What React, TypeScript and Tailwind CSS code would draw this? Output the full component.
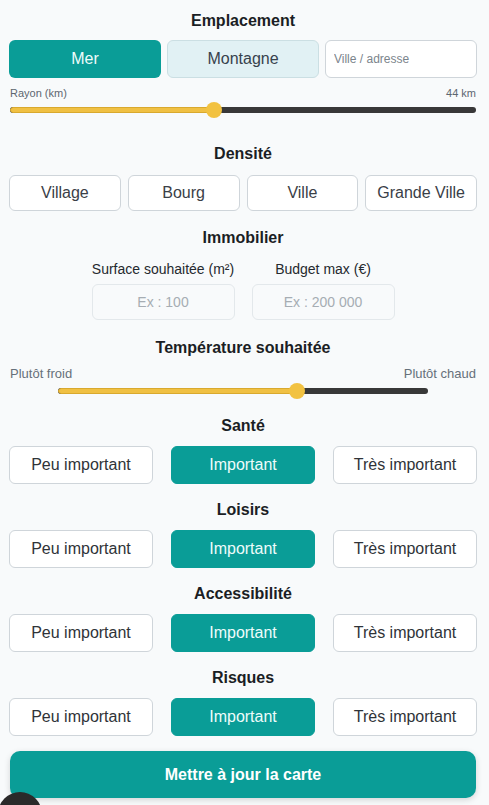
import React, { useState } from "react";

type Level = "peu" | "important" | "tres";

function Heading({ children, className = "" }: { children: React.ReactNode; className?: string }) {
  return (
    <h2 className={`text-center text-[16px] leading-[20px] font-bold text-[#1b1e24] ${className}`}>
      {children}
    </h2>
  );
}

function Slider({ value, className = "" }: { value: number; className?: string }) {
  return (
    <div className={`relative h-[14px] flex items-center ${className}`}>
      <div className="w-full h-[6px] rounded-full bg-[#383838] overflow-hidden flex">
        <div className="h-full bg-[#f0c043] border border-[#d9a92e] rounded-l-full" style={{ width: `${value * 100}%` }} />
      </div>
      <div
        className="absolute top-[-1px] w-[16px] h-[16px] -ml-[8px] rounded-full bg-[#f2c241]"
        style={{ left: `${value * 100}%` }}
      />
    </div>
  );
}

function ImportanceRow({ value, onChange }: { value: Level; onChange: (v: Level) => void }) {
  const opts: { k: Level; label: string }[] = [
    { k: "peu", label: "Peu important" },
    { k: "important", label: "Important" },
    { k: "tres", label: "Très important" },
  ];
  return (
    <div className="grid grid-cols-3 gap-[18px] mt-[10px]">
      {opts.map((o) => (
        <button
          key={o.k}
          onClick={() => onChange(o.k)}
          className={
            o.k === value
              ? "h-[38px] rounded-[6px] bg-[#0a9d97] text-[#eefcfb] text-[16px] border border-[#0a9d97]"
              : "h-[38px] rounded-[6px] bg-white text-[#2f3338] text-[16px] border border-[#cfd5da]"
          }
        >
          {o.label}
        </button>
      ))}
    </div>
  );
}

export default function App() {
  const [lieu, setLieu] = useState("mer");
  const [levels, setLevels] = useState<Record<string, Level>>({
    sante: "important",
    loisirs: "important",
    access: "important",
    risques: "important",
  });

  const sections = [
    { k: "sante", title: "Santé" },
    { k: "loisirs", title: "Loisirs" },
    { k: "access", title: "Accessibilité" },
    { k: "risques", title: "Risques" },
  ];

  return (
    <div className="min-h-screen bg-[#f8fafb] font-['Liberation_Sans',Arial,sans-serif] overflow-hidden relative">
      <div className="w-[468px] ml-[9px] pt-[11px] pb-[10px]">
        <Heading>Emplacement</Heading>
        <div className="grid grid-cols-3 gap-[6px] mt-[9px]">
          <button
            onClick={() => setLieu("mer")}
            className={
              lieu === "mer"
                ? "h-[38px] rounded-[6px] bg-[#0a9d97] text-[#eefcfb] text-[16px]"
                : "h-[38px] rounded-[6px] bg-[#e1f1f4] border border-[#cbdfe3] text-[#37424d] text-[16px]"
            }
          >
            Mer
          </button>
          <button
            onClick={() => setLieu("montagne")}
            className={
              lieu === "montagne"
                ? "h-[38px] rounded-[6px] bg-[#0a9d97] text-[#eefcfb] text-[16px]"
                : "h-[38px] rounded-[6px] bg-[#e1f1f4] border border-[#cbdfe3] text-[#37424d] text-[16px]"
            }
          >
            Montagne
          </button>
          <input
            placeholder="Ville / adresse"
            className="h-[38px] rounded-[6px] bg-white border border-[#cfd5da] px-[8px] text-[12px] placeholder:text-[#7b848c] outline-none"
          />
        </div>
        <div className="flex justify-between mt-[9px] px-[1px] text-[11px] leading-[12px] text-[#5d6670]">
          <span>Rayon (km)</span>
          <span>44 km</span>
        </div>
        <Slider value={0.437} className="mt-[4px] mx-[1px]" />

        <Heading className="mt-[27px]">Densité</Heading>
        <div className="grid grid-cols-4 gap-[7px] mt-[11px]">
          {["Village", "Bourg", "Ville", "Grande Ville"].map((d) => (
            <button
              key={d}
              className="h-[36px] rounded-[6px] bg-white border border-[#cfd5da] text-[#3a4047] text-[16px]"
            >
              {d}
            </button>
          ))}
        </div>

        <Heading className="mt-[17px]">Immobilier</Heading>
        <div className="flex justify-center gap-[17px] mt-[12px]">
          <div className="flex flex-col items-center w-[143px]">
            <label className="text-[14px] leading-[18px] text-[#25292e] whitespace-nowrap">Surface souhaitée (m²)</label>
            <input
              placeholder="Ex : 100"
              className="mt-[6px] w-[143px] h-[36px] rounded-[6px] bg-[#f8fafb] border border-[#e3e8eb] text-center text-[14px] placeholder:text-[#a6adb3] outline-none"
            />
          </div>
          <div className="flex flex-col items-center w-[143px]">
            <label className="text-[14px] leading-[18px] text-[#25292e] whitespace-nowrap">Budget max (€)</label>
            <input
              placeholder="Ex : 200 000"
              className="mt-[6px] w-[143px] h-[36px] rounded-[6px] bg-[#f8fafb] border border-[#e3e8eb] text-center text-[14px] placeholder:text-[#a6adb3] outline-none"
            />
          </div>
        </div>

        <Heading className="mt-[18px]">Température souhaitée</Heading>
        <div className="flex justify-between mt-[8px] px-[1px] text-[13px] leading-[16px] text-[#66707a]">
          <span>Plutôt froid</span>
          <span>Plutôt chaud</span>
        </div>
        <Slider value={0.646} className="mt-[2px] w-[370px] mx-auto" />

        {sections.map((s, i) => (
          <div key={s.k} className={i === 0 ? "mt-[18px]" : "mt-[16px]"}>
            <Heading>{s.title}</Heading>
            <ImportanceRow
              value={levels[s.k]}
              onChange={(v) => setLevels({ ...levels, [s.k]: v })}
            />
          </div>
        ))}

        <button className="mt-[15px] ml-[1px] w-[466px] h-[47px] rounded-[10px] bg-[#0a9d97] text-white text-[16px] font-bold shadow-[0_2px_6px_rgba(0,0,0,0.15)]">
          Mettre à jour la carte
        </button>
      </div>
      <div className="absolute left-[-2px] top-[792px] w-[44px] h-[44px] rounded-full bg-[#2a2a2a]" />
    </div>
  );
}
